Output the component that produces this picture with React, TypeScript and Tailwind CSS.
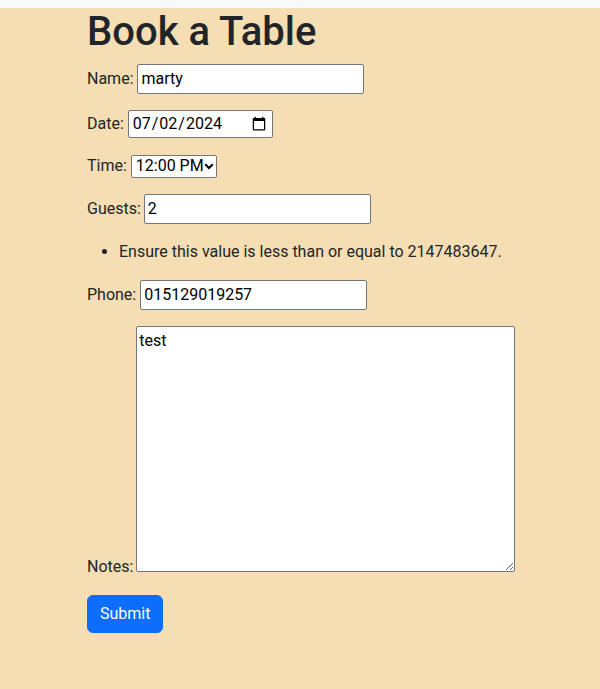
import React from "react";

const inputCls =
  "bg-white text-black border border-[#767676] rounded-[2px] px-[3px] py-[2px] leading-[1.5] align-baseline";

export default function App() {
  return (
    <div
      className="min-h-screen bg-[#f5deb3] text-[#212529] text-base leading-[1.5]"
      style={{ fontFamily: "Roboto, 'Noto Sans', 'Liberation Sans', sans-serif" }}
    >
      <div className="h-2 bg-[#f8f9fa]" />
      <div className="pl-[87px]">
        <h1 className="text-[40px] font-medium leading-[1.2] mb-2">Book a Table</h1>
        <form>
          <p className="mb-4">
            <label>Name:</label>{" "}
            <input type="text" defaultValue="marty" className={`${inputCls} w-[227px]`} />
          </p>
          <p className="mb-4">
            <label>Date:</label>{" "}
            <input
              type="date"
              defaultValue="2024-07-02"
              className={`${inputCls} w-[145px] h-[28px] py-0`}
            />
          </p>
          <p className="mb-4">
            <label>Time:</label>{" "}
            <span className="relative inline-block align-baseline">
              <select
                defaultValue="12:00 PM"
                className="appearance-none bg-white text-black border border-[#767676] rounded-[2px] w-[86px] h-[23px] pl-[4px] pr-[12px] leading-none"
              >
                <option>12:00 PM</option>
              </select>
              <svg
                className="absolute right-[3px] top-[9px] pointer-events-none"
                width="10"
                height="7"
                viewBox="0 0 10 7"
              >
                <path d="M1.2 1.2 L5 5 L8.8 1.2" fill="none" stroke="#000" strokeWidth="2" />
              </svg>
            </span>
          </p>
          <p className="mb-4">
            <label>Guests:</label>{" "}
            <input type="text" defaultValue="2" className={`${inputCls} w-[227px] -ml-px`} />
          </p>
          <ul className="list-disc pl-8 mb-4">
            <li>Ensure this value is less than or equal to 2147483647.</li>
          </ul>
          <p className="mb-4">
            <label>Phone:</label>{" "}
            <input type="text" defaultValue="015129019257" className={`${inputCls} w-[227px]`} />
          </p>
          <p className="mb-4">
            <label>Notes:</label>{" "}
            <textarea
              defaultValue="test"
              className="bg-white text-black border border-[#767676] rounded-[2px] px-[2px] py-[2px] w-[379px] h-[246px] leading-[1.5] -ml-px"
            />
          </p>
          <button
            type="button"
            className="bg-[#0d6efd] text-white border border-[#0d6efd] rounded-[6px] px-3 py-[6px] leading-[1.5]"
          >
            Submit
          </button>
        </form>
      </div>
    </div>
  );
}
